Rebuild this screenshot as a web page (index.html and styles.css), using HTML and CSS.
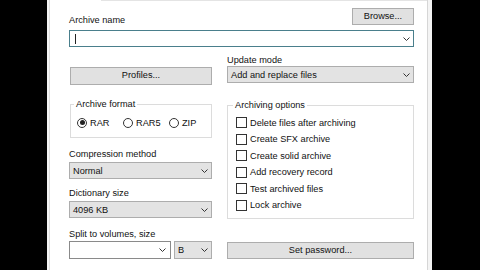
FILE: index.html
```html
<!DOCTYPE html>
<html>
<head>
<meta charset="utf-8">
<link rel="stylesheet" href="styles.css">
</head>
<body>
<div class="dialog">
  <div class="panel">
    <div class="tabline"><span class="tab-gap"></span><span class="tab-rest"></span></div>
    <div class="content">
      <div class="top-row">
        <span class="label name-label">Archive name</span>
        <button class="btn browse">Browse...</button>
      </div>
      <div class="combo edit focused name-combo">
        <span class="caret"></span>
        <svg class="chev" width="7" height="4" viewBox="0 0 7 4"><path d="M0.5 0.5 L3.5 3.5 L6.5 0.5" fill="none" stroke="#333" stroke-width="1"/></svg>
      </div>
      <div class="columns">
        <div class="col col-left">
          <button class="btn profiles">Profiles...</button>
          <fieldset class="group format-group">
            <legend>Archive format</legend>
            <div class="radios">
              <label class="radio"><span class="rb on"></span>RAR</label>
              <label class="radio"><span class="rb"></span>RAR5</label>
              <label class="radio"><span class="rb"></span>ZIP</label>
            </div>
          </fieldset>
          <div class="label field-label first">Compression method</div>
          <div class="combo dropdown">
            <span class="val">Normal</span>
            <svg class="chev" width="7" height="4" viewBox="0 0 7 4"><path d="M0.5 0.5 L3.5 3.5 L6.5 0.5" fill="none" stroke="#333" stroke-width="1"/></svg>
          </div>
          <div class="label field-label">Dictionary size</div>
          <div class="combo dropdown">
            <span class="val">4096 KB</span>
            <svg class="chev" width="7" height="4" viewBox="0 0 7 4"><path d="M0.5 0.5 L3.5 3.5 L6.5 0.5" fill="none" stroke="#333" stroke-width="1"/></svg>
          </div>
          <div class="label field-label split-label">Split to volumes, size</div>
          <div class="split-row">
            <div class="combo edit split-size">
              <svg class="chev" width="7" height="4" viewBox="0 0 7 4"><path d="M0.5 0.5 L3.5 3.5 L6.5 0.5" fill="none" stroke="#333" stroke-width="1"/></svg>
            </div>
            <div class="combo dropdown unit">
              <span class="val">B</span>
              <svg class="chev" width="7" height="4" viewBox="0 0 7 4"><path d="M0.5 0.5 L3.5 3.5 L6.5 0.5" fill="none" stroke="#333" stroke-width="1"/></svg>
            </div>
          </div>
        </div>
        <div class="col col-right">
          <div class="label update-label">Update mode</div>
          <div class="combo dropdown">
            <span class="val">Add and replace files</span>
            <svg class="chev" width="7" height="4" viewBox="0 0 7 4"><path d="M0.5 0.5 L3.5 3.5 L6.5 0.5" fill="none" stroke="#333" stroke-width="1"/></svg>
          </div>
          <fieldset class="group options-group">
            <legend>Archiving options</legend>
            <label class="check"><span class="cb"></span>Delete files after archiving</label>
            <label class="check"><span class="cb"></span>Create SFX archive</label>
            <label class="check"><span class="cb"></span>Create solid archive</label>
            <label class="check"><span class="cb"></span>Add recovery record</label>
            <label class="check"><span class="cb"></span>Test archived files</label>
            <label class="check"><span class="cb"></span>Lock archive</label>
          </fieldset>
          <button class="btn password">Set password...</button>
        </div>
      </div>
    </div>
  </div>
</div>
</body>
</html>
```

FILE: styles.css
```css
html, body {
  margin: 0;
  padding: 0;
}
body {
  width: 480px;
  height: 270px;
  overflow: hidden;
  background: #000;
  font-family: "Liberation Sans", Arial, sans-serif;
  font-size: 9.2px;
  color: #111;
}
.dialog {
  margin-left: 47px;
  width: 385px;
  height: 270px;
  box-sizing: border-box;
  background: #f4f4f4;
  padding: 0 4px 0 2px;
  display: flex;
}
.panel {
  flex: 1;
  background: #fff;
  border-left: 1px solid #dcdcdc;
  border-right: 1px solid #d6d6d6;
  display: flex;
  flex-direction: column;
}
.tabline {
  display: flex;
  height: 1px;
}
.tab-gap {
  width: 51px;
}
.tab-rest {
  flex: 1;
  background: #e4e4e4;
}
.content {
  padding: 7px 13px 0 19px;
  display: flex;
  flex-direction: column;
}
.label {
  line-height: 11px;
  white-space: nowrap;
}
.top-row {
  display: flex;
  justify-content: space-between;
  align-items: flex-end;
  height: 17px;
}
.name-label {
  margin-bottom: -1px;
}
.btn {
  font: inherit;
  color: #111;
  margin: 0;
  padding: 0;
  background: #e1e1e1;
  border: 1px solid #adadad;
  box-sizing: border-box;
  text-align: center;
  line-height: 1;
}
.browse {
  width: 62px;
  height: 17px;
}
.combo {
  display: flex;
  align-items: center;
  height: 17px;
  box-sizing: border-box;
  border: 1px solid #adadad;
  background: #e3e3e3;
  padding: 0 3px 0 3px;
}
.combo .val {
  white-space: nowrap;
}
.combo .chev {
  margin-left: auto;
  flex: none;
}
.combo.edit {
  background: #fff;
  border-color: #8a8a8a;
}
.combo.focused {
  border-color: #4a7f8c;
}
.name-combo {
  margin-top: 5px;
  padding-left: 5px;
}
.caret {
  width: 1px;
  height: 10px;
  background: #222;
}
.columns {
  display: grid;
  grid-template-columns: 143px 187px;
  column-gap: 15px;
  margin-top: 8px;
}
.col {
  display: flex;
  flex-direction: column;
}
.profiles {
  margin: 12px 0 0 1px;
  height: 18px;
}
.group {
  margin: 0;
  border: 1px solid #dcdcdc;
  min-width: 0;
}
.group legend {
  padding: 0 2px;
  margin-left: -3px;
  line-height: 10px;
}
.format-group {
  margin: 14px 0 0 1px;
  padding: 8px 4px 9px 6px;
}
.radios {
  display: flex;
  height: 11px;
  align-items: center;
}
.radio {
  display: flex;
  align-items: center;
  gap: 3px;
  width: 46px;
  flex: none;
}
.rb {
  width: 10px;
  height: 10px;
  box-sizing: border-box;
  border: 1px solid #333;
  border-radius: 50%;
  background: #fff;
  display: flex;
  align-items: center;
  justify-content: center;
}
.rb.on::after {
  content: "";
  width: 5px;
  height: 5px;
  border-radius: 50%;
  background: #222;
}
.field-label {
  line-height: 12px;
  margin-top: 8px;
  margin-bottom: 2px;
}
.field-label.first {
  margin-top: 10px;
}
.split-label {
  margin-top: 10px;
  margin-bottom: 1px;
}
.split-row {
  display: flex;
  gap: 3px;
}
.split-row .combo {
  height: 18px;
}
.split-size {
  width: 102px;
  padding-right: 4px;
}
.unit {
  flex: 1;
}
.update-label {
  line-height: 11px;
}
.options-group {
  margin-top: 17px;
  padding: 4.5px 4px 4.5px 8px;
}
.check {
  display: flex;
  align-items: center;
  gap: 3px;
  height: 16.5px;
  white-space: nowrap;
}
.cb {
  width: 11px;
  height: 11px;
  box-sizing: border-box;
  border: 1px solid #333;
  background: #fff;
  flex: none;
}
.password {
  margin-top: 23px;
  height: 17px;
}
```
